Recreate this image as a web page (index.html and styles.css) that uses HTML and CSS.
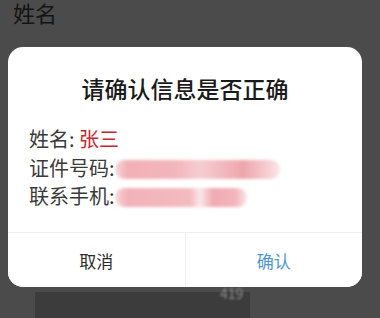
FILE: index.html
```html
<!DOCTYPE html>
<html lang="zh-CN">
<head>
    <meta charset="UTF-8">
    <meta name="viewport" content="width=device-width, initial-scale=1.0">
    <title>确认信息</title>
    <link rel="stylesheet" href="styles.css">
</head>
<body>
  <div class="page-label">姓名</div>

  <div class="dialog">
    <div class="dialog-body">
      <h1>请确认信息是否正确</h1>
      <div class="info-row">姓名: <span class="name-value">张三</span></div>
      <div class="info-row">证件号码:<span class="masked masked-long"></span></div>
      <div class="info-row">联系手机:<span class="masked masked-short"></span></div>
    </div>
    <div class="dialog-actions">
      <button class="button-cancel">取消</button>
      <button class="button-confirm">确认</button>
    </div>
  </div>

  <div class="bottom-bar"><span>419</span></div>
</body>
</html>
```

FILE: styles.css
```css
body {
    margin: 0px;
    font-family: "Noto Sans CJK SC", "Noto Sans", sans-serif;
    background-color: #4b4b4b;
    height: 318px;
    overflow: hidden;
}

.page-label {
    padding-left: 13px;
    font-size: 22px;
    line-height: 24px;
    color: #141414;
}

.dialog {
    width: 354px;
    height: 240px;
    margin-top: 23px;
    margin-left: 8px;
    background-color: #ffffff;
    border-radius: 15px;
    display: flex;
    flex-direction: column;
    overflow: hidden;
}

.dialog-body {
    height: 185px;
    padding-left: 21px;
    box-sizing: border-box;
}

h1 {
    font-size: 23px;
    font-weight: 500;
    line-height: 30px;
    text-align: center;
    color: #1a1a1a;
    margin: 0px;
    margin-left: -21px;
    padding-top: 26px;
    padding-bottom: 22px;
}

.info-row {
    font-size: 20px;
    line-height: 28.5px;
    color: #3a3a3a;
    white-space: nowrap;
}

.name-value {
    color: #c9252e;
}

.masked {
    display: inline-block;
    height: 19px;
    vertical-align: -3px;
    border-radius: 9px;
    filter: blur(1.5px);
}

.masked-long {
    width: 165px;
    background: linear-gradient(90deg, #f8dadc 0px, #f1b0b6 12px, #f2b5bb 60px, #f6cdd1 85px, #eda6ad 128px, #f4c6ca 148px, #fae6e8 165px);
}

.masked-short {
    width: 132px;
    background: linear-gradient(90deg, #f8dadc 0px, #f1b2b8 12px, #f3bbc0 75px, #fae8ea 85px, #efabb2 98px, #f1b5bb 120px, #fae6e8 132px);
}

.dialog-actions {
    flex: 1;
    display: flex;
    border-top: 1px solid #f0f0f0;
}

button {
    flex: 1;
    font-family: "Noto Sans CJK SC", "Noto Sans", sans-serif;
    font-size: 17px;
    background-color: #ffffff;
    border: 0px;
    margin: 0px;
    padding: 0px;
    cursor: pointer;
}

.button-cancel {
    color: #2a2a2a;
    border-right: 1px solid #f0f0f0;
}

.button-confirm {
    color: #4b98d0;
}

.bottom-bar {
    width: 215px;
    height: 26px;
    margin-top: 5px;
    margin-left: 35px;
    background-color: #3c3c3c;
    position: relative;
}

.bottom-bar span {
    position: absolute;
    left: 185px;
    top: -9px;
    font-size: 14px;
    color: #8a8a8a;
    filter: blur(1px);
}
```
